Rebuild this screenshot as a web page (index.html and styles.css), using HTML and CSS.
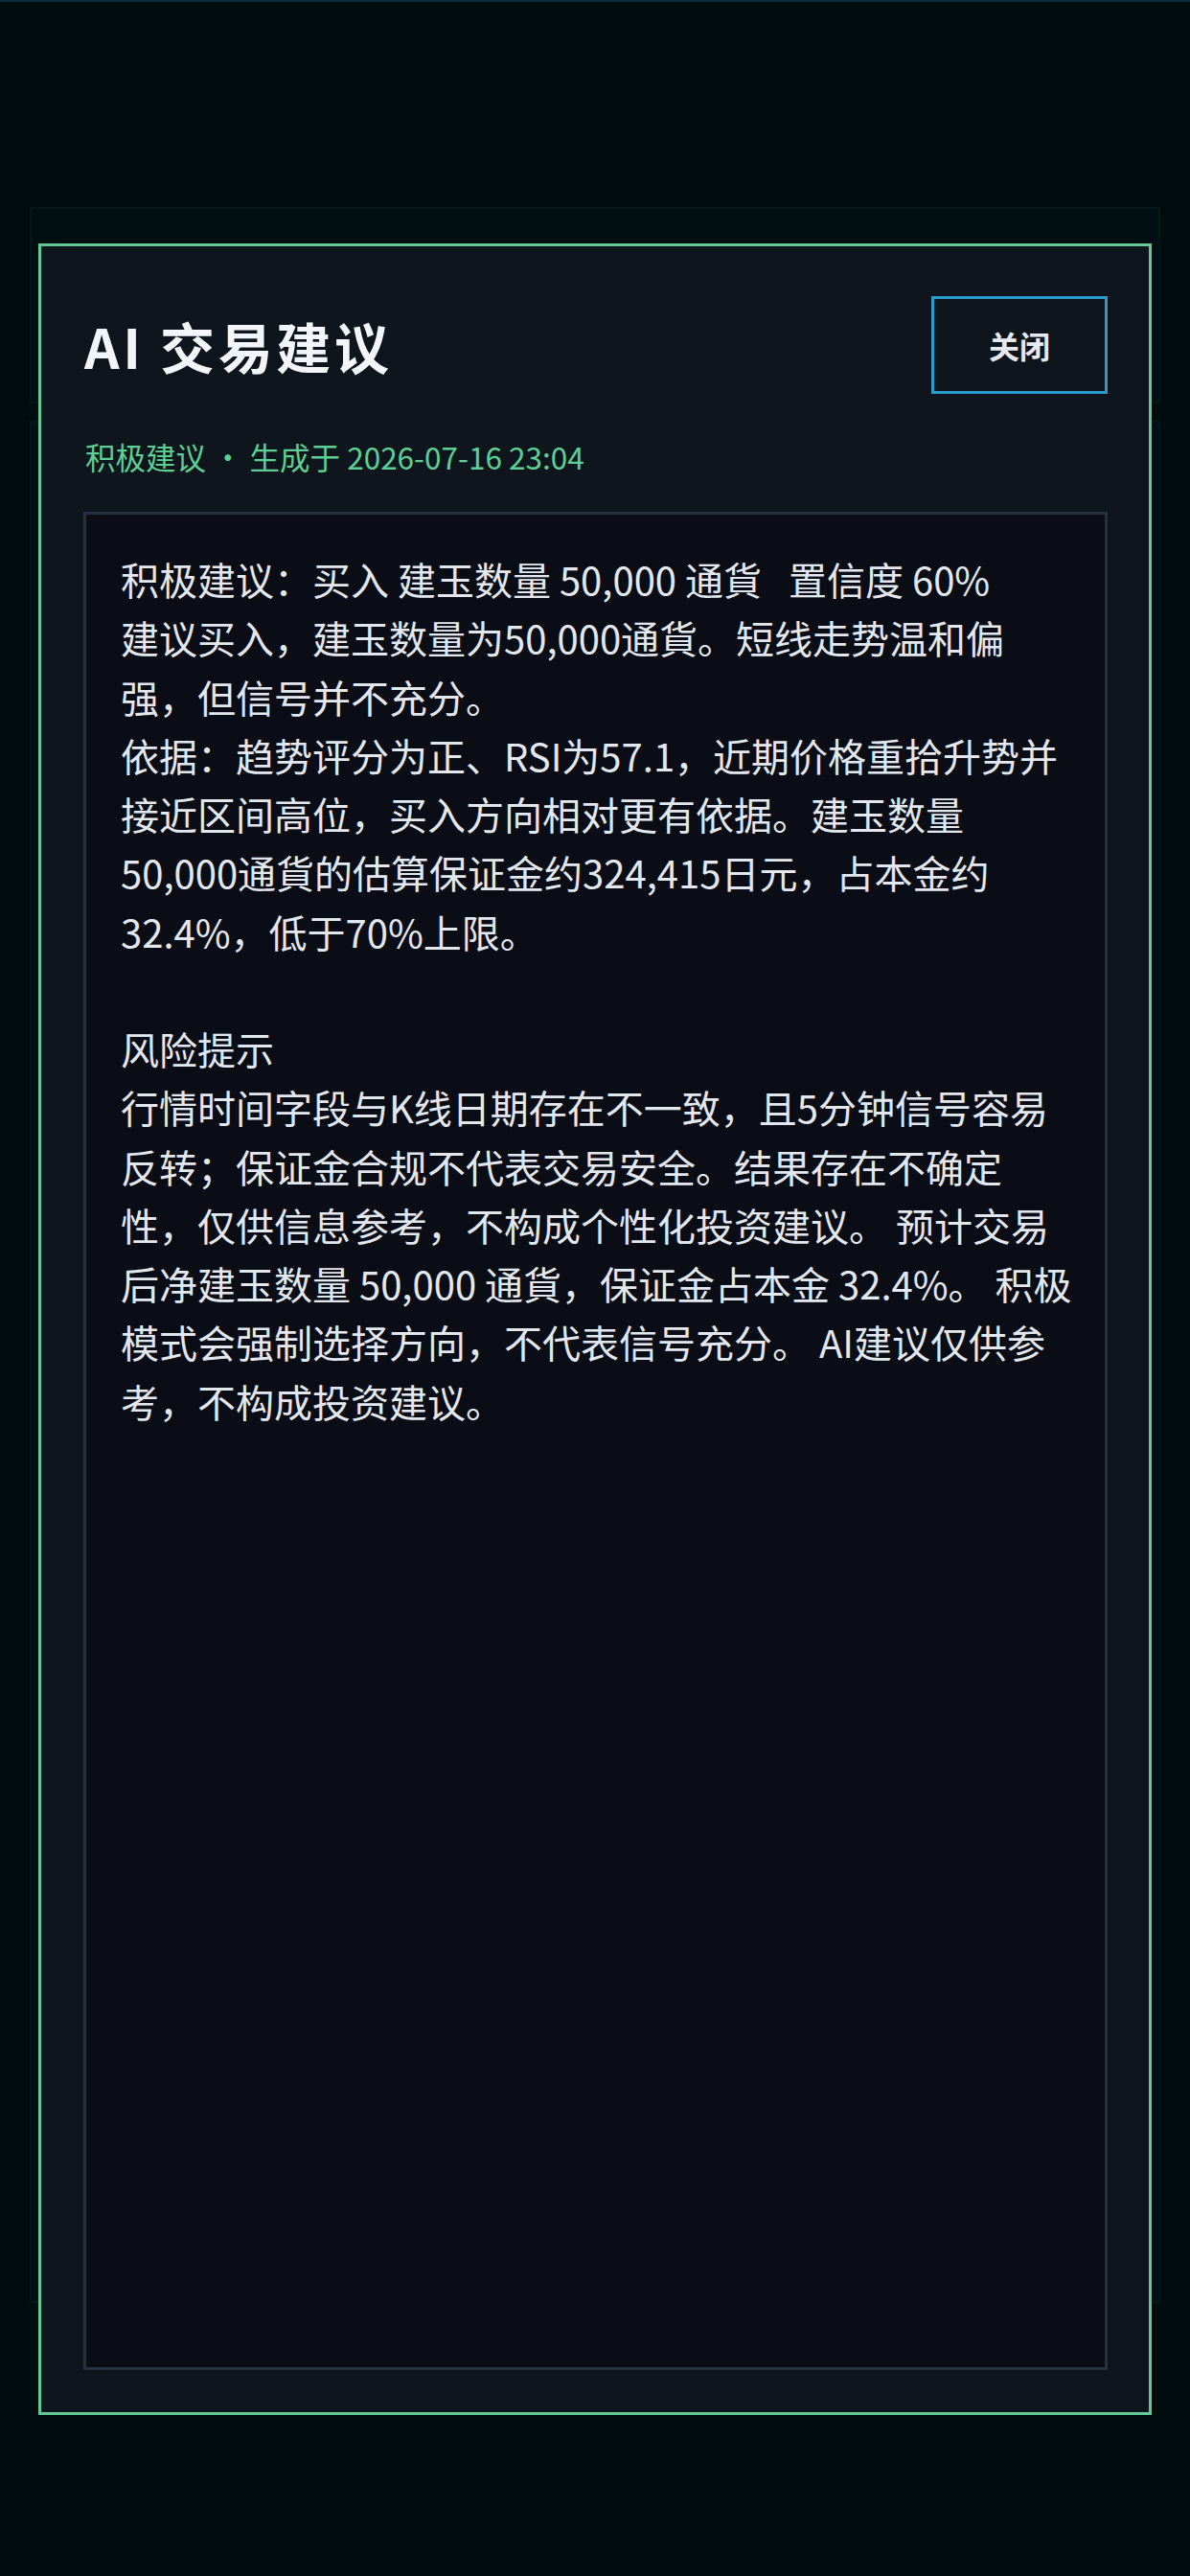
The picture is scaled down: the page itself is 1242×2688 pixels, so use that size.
FILE: index.html
```html
<!DOCTYPE html>
<html lang="zh-CN">
<head>
<meta charset="utf-8">
<title>AI 交易建议</title>
<link rel="stylesheet" href="styles.css">
</head>
<body>
<div class="topline"></div>
<main class="page">
  <section class="card card-small"></section>
  <section class="card card-large"></section>
</main>
<div class="modal" role="dialog" aria-label="AI 交易建议">
  <header class="modal-head">
    <h1 class="modal-title">AI 交易建议</h1>
    <button class="close-btn" type="button">关闭</button>
  </header>
  <p class="modal-sub">积极建议 · 生成于 2026-07-16 23:04</p>
  <div class="advice">
    <p class="advice-line">积极建议：买入 建玉数量 50,000 通貨<span class="conf">置信度 60%</span></p>
    <p class="advice-para">建议买入，建玉数量为50,000通貨。短线走势温和偏<br>强，但信号并不充分。<br>依据：趋势评分为正、RSI为57.1，近期价格重拾升势并<br>接近区间高位，买入方向相对更有依据。建玉数量<br>50,000通貨的估算保证金约324,415日元，占本金约<br>32.4%，低于70%上限。</p>
    <p class="advice-head">风险提示</p>
    <p class="advice-para">行情时间字段与K线日期存在不一致，且5分钟信号容易<br>反转；保证金合规不代表交易安全。结果存在不确定<br>性，仅供信息参考，不构成个性化投资建议。 预计交易<br>后净建玉数量 50,000 通貨，保证金占本金 32.4%。 积极<br>模式会强制选择方向，不代表信号充分。 AI建议仅供参<br>考，不构成投资建议。</p>
  </div>
</div>
</body>
</html>
```
FILE: styles.css
```css
* { box-sizing: border-box; }
html, body {
  margin: 0;
  padding: 0;
  background: #010c0e;
}
body {
  width: 1242px;
  height: 2688px;
  position: relative;
  overflow: hidden;
  font-family: "Noto Sans CJK SC", "Noto Sans", sans-serif;
}
.topline {
  height: 2px;
  background: #0b2d3b;
}
.page {
  padding: 214px 31px 0;
  display: flex;
  flex-direction: column;
  gap: 18px;
}
.card {
  background: #020f12;
  border: 2px solid #071619;
}
.card-small { height: 205px; }
.card-large { height: 1964px; }

.modal {
  position: absolute;
  left: 40px;
  top: 254px;
  width: 1162px;
  height: 2266px;
  background: #0e151c;
  border: 3px solid #62c896;
  padding: 52px 43px 44px 44px;
  display: flex;
  flex-direction: column;
}
.modal-head {
  display: flex;
  align-items: center;
  justify-content: space-between;
  height: 102px;
}
.modal-title {
  margin: 0;
  font-size: 57px;
  font-weight: 700;
  letter-spacing: 3.6px;
  color: #f2f5fa;
  line-height: 1;
  padding-left: 1px;
}
.close-btn {
  width: 184px;
  height: 102px;
  background: transparent;
  border: 3px solid #2a9bcb;
  color: #e6e9f0;
  font-family: "Noto Sans CJK SC", "Noto Sans", sans-serif;
  font-size: 32px;
  font-weight: 700;
  padding: 0;
}
.modal-sub {
  margin: 45px 0 0;
  font-size: 31.5px;
  line-height: 40px;
  color: #5dcf94;
  padding-left: 2px;
}
.advice {
  flex: 1;
  margin-top: 38px;
  background: #0b0d16;
  border: 3px solid #243242;
  padding: 37px 36px;
  color: #e3e7ee;
  font-size: 40px;
  line-height: 61.25px;
}
.advice p {
  margin: 0;
  white-space: nowrap;
}
.conf {
  margin-left: 0.7em;
}
.advice-head {
  margin-top: 61.25px !important;
}
```
